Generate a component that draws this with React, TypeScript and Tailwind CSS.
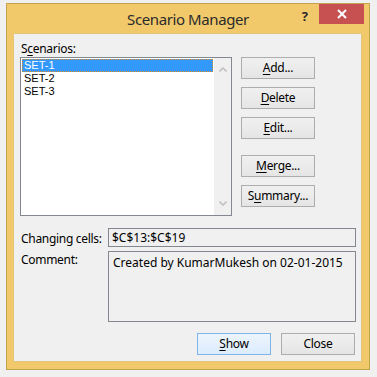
import React from "react";

const font = { fontFamily: '"Segoe UI", "Noto Sans", sans-serif' };
const listFont = { fontFamily: '"Liberation Sans", Arial, sans-serif' };

function Btn({ children, primary = false }: { children: React.ReactNode; primary?: boolean }) {
  return (
    <div
      className={
        "w-[74px] h-[22px] flex items-center justify-center text-[12px] tracking-[-0.3px] leading-none text-black border " +
        (primary
          ? "border-[#7eb4ea] bg-gradient-to-b from-[#ecf4fc] to-[#dcecfc]"
          : "border-[#adadad] bg-gradient-to-b from-[#f0f0f0] to-[#e5e5e5]")
      }
    >
      {children}
    </div>
  );
}

const U = ({ children }: { children: React.ReactNode }) => (
  <span className="underline underline-offset-2">{children}</span>
);

export default function App() {
  return (
    <div className="w-[377px] h-[377px] bg-[#f0f0f0] pt-[3px] pl-[6px] overflow-hidden" style={font}>
      <div className="w-[364px] h-[367px] border border-[#c4a24e] bg-[#f1c96b] flex flex-col">
        {/* title bar */}
        <div className="h-[29px] grid grid-cols-[1fr_auto_1fr] shrink-0">
          <div />
          <div className="self-center text-[15px] tracking-[-0.4px] text-[#2b2b2b] leading-none pt-[1px]">Scenario Manager</div>
          <div className="flex justify-end items-start pr-[5px]">
            <div className="text-[13px] font-bold text-[#2b2b2b] leading-none mt-[6px] mr-[11px]">?</div>
            <div className="w-[45px] h-[20px] bg-[#c75050] flex items-center justify-center">
              <svg width="10" height="10" viewBox="0 0 10 10">
                <path d="M1 1 L9 9 M9 1 L1 9" stroke="#fff" strokeWidth="2" />
              </svg>
            </div>
          </div>
        </div>
        {/* content */}
        <div className="ml-[6px] mr-[7px] mb-[7px] flex-1 bg-[#f0f0f0] border border-[#e3c57a] flex flex-col px-[6px] pt-[7px] text-[12px] text-black">
          <div className="h-[16px] leading-[16px] ml-[1px] tracking-[-0.3px]">
            S<U>c</U>enarios:
          </div>
          <div className="flex h-[159px] mt-0">
            <div className="w-[212px] h-[159px] border border-[#828790] bg-white flex p-[1px] pr-0">
              <div className="w-[191px] flex flex-col text-[11px]" style={listFont}>
                <div className="h-[13px] bg-[#3399ff] outline-1 outline-dotted outline-[#e08a2a] -outline-offset-1 text-white leading-[13px] pl-[2px]">
                  SET-1
                </div>
                <div className="h-[13px] leading-[13px] pl-[2px]">SET-2</div>
                <div className="h-[13px] leading-[13px] pl-[2px]">SET-3</div>
              </div>
              <div className="w-[17px] ml-[1px] -my-[1px] bg-[#f0f0f0] flex flex-col justify-between items-center py-[9px]">
                <svg width="8" height="5" viewBox="0 0 8 5">
                  <path d="M0.5 4.5 L4 1 L7.5 4.5" stroke="#c2c2c2" strokeWidth="1.6" fill="none" />
                </svg>
                <svg width="8" height="5" viewBox="0 0 8 5">
                  <path d="M0.5 0.5 L4 4 L7.5 0.5" stroke="#c2c2c2" strokeWidth="1.6" fill="none" />
                </svg>
              </div>
            </div>
            <div className="ml-[9px] flex flex-col">
              <Btn>
                <U>A</U>dd...
              </Btn>
              <div className="mt-[8px]">
                <Btn>
                  <U>D</U>elete
                </Btn>
              </div>
              <div className="mt-[8px]">
                <Btn>
                  <U>E</U>dit...
                </Btn>
              </div>
              <div className="mt-[16px]">
                <Btn>
                  <U>M</U>erge...
                </Btn>
              </div>
              <div className="mt-[8px]">
                <Btn>
                  S<U>u</U>mmary...
                </Btn>
              </div>
            </div>
          </div>
          <div className="grid grid-cols-[88px_248px] mt-[12px]">
            <div className="ml-[1px] leading-[19px] pt-[1px] tracking-[-0.3px]">Changing cells:</div>
            <div className="h-[19px] border border-[#828790] bg-[#f0f0f0] leading-[17px] pl-[3px]">$C$13:$C$19</div>
          </div>
          <div className="grid grid-cols-[88px_248px] mt-[3px]">
            <div className="ml-[1px] leading-[16px] pt-[1px] tracking-[-0.3px]">Comment:</div>
            <div className="h-[71px] border border-[#828790] bg-[#f0f0f0] leading-[16px] pl-[4px] pt-[3px]">
              Created by KumarMukesh on 02-01-2015
            </div>
          </div>
          <div className="flex justify-end gap-[10px] mt-[11px] pr-0">
            <Btn primary>
              <U>S</U>how
            </Btn>
            <Btn>Close</Btn>
          </div>
        </div>
      </div>
    </div>
  );
}
